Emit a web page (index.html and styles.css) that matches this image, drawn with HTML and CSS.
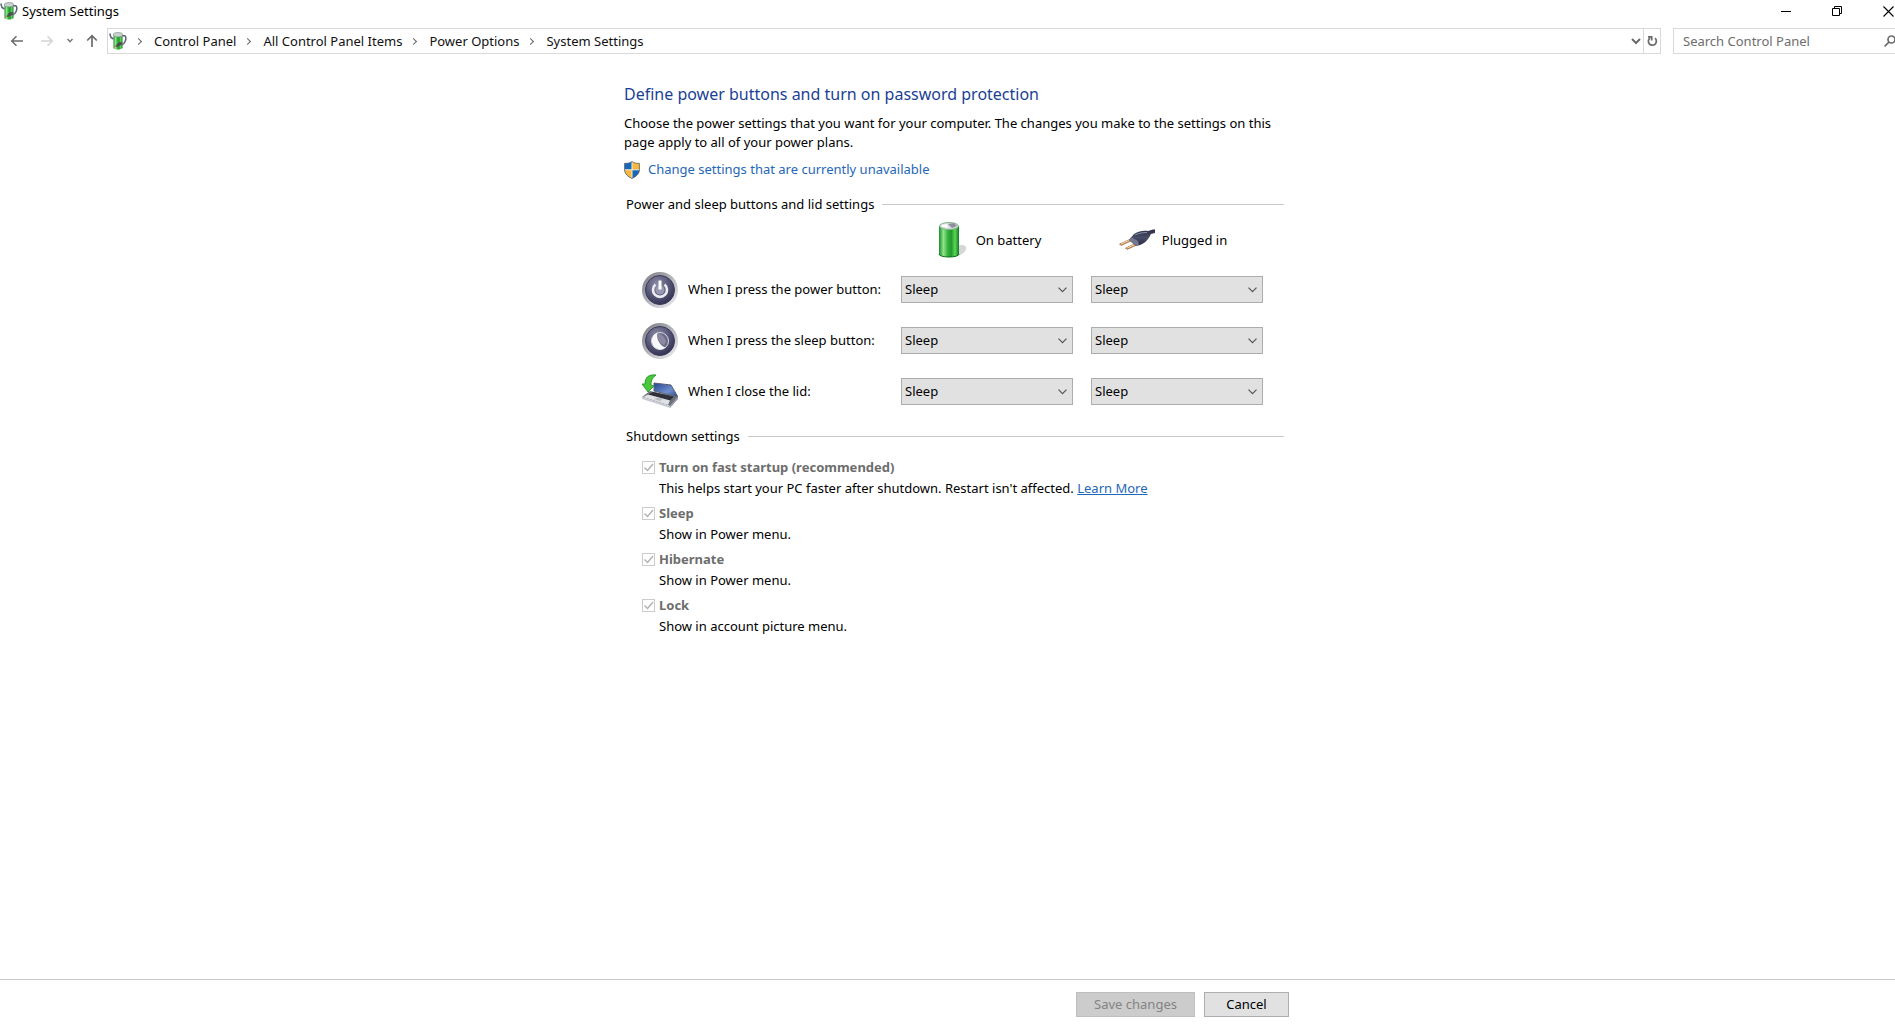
FILE: index.html
```html
<!DOCTYPE html>
<html lang="en">
<head>
<meta charset="utf-8">
<title>System Settings</title>
<link rel="stylesheet" href="styles.css">
</head>
<body>
<svg class="defs" aria-hidden="true">
  <defs>
    <linearGradient id="green" x1="0" x2="1" y1="0" y2="0">
      <stop offset="0" stop-color="#1c8a2c"/><stop offset=".22" stop-color="#8fe68a"/><stop offset=".45" stop-color="#35ad3a"/><stop offset=".62" stop-color="#1f9a2c"/><stop offset=".8" stop-color="#5fd65a"/><stop offset="1" stop-color="#0f7a1f"/>
    </linearGradient>
    <linearGradient id="ring" x1="0" x2="1" y1="0" y2="1">
      <stop offset="0" stop-color="#77777c"/><stop offset=".5" stop-color="#b4b4bc"/><stop offset="1" stop-color="#f1f1f5"/>
    </linearGradient>
    <radialGradient id="face" cx=".4" cy=".3" r=".75">
      <stop offset="0" stop-color="#8d8ca6"/><stop offset=".5" stop-color="#5c5b7c"/><stop offset="1" stop-color="#2f2e50"/>
    </radialGradient>
    <linearGradient id="screen" x1="0" x2="1" y1="0" y2="1">
      <stop offset="0" stop-color="#26468f"/><stop offset=".6" stop-color="#6f8fd0"/><stop offset="1" stop-color="#2b3f7c"/>
    </linearGradient>
    <linearGradient id="plug" x1="0" x2="0" y1="0" y2="1">
      <stop offset="0" stop-color="#2c2e45"/><stop offset=".5" stop-color="#4a4d68"/><stop offset="1" stop-color="#24263a"/>
    </linearGradient>
    <symbol id="power-icon" viewBox="0 0 18 18">
      <path d="M4.500 3v12.500c0 2.800 9 2.800 9 0V3z" fill="url(#green)"/>
      <ellipse cx="9" cy="2.800" rx="4.600" ry="2.200" fill="#c9d3cd" stroke="#6f7f78" stroke-width=".6"/>
      <path d="M.8 1.500l1.200 4 2.500 1.500M13.500 4c3.500-1.500 4 2 2.600 5.500-.8 2-2 3-3.600 3.500" fill="none" stroke="#5d6070" stroke-width="1.500"/>
      <path d="M5.500 15l4-4.500 4-.5-1.500 3-4 2z" fill="#4a4c50"/>
      <path d="M4.500 16l3-2" stroke="#c99a5c"/>
    </symbol>
  </defs>
</svg>

<div class="window">
  <header class="titlebar">
    <svg class="app-icon" aria-hidden="true"><use href="#power-icon"/></svg>
    <h1 class="window-title">System Settings</h1>
    <div class="window-controls">
      <button class="control" type="button" aria-label="Minimize"><svg width="11" height="11" viewBox="0 0 11 11"><path d="M0 5.500h10" stroke="#000"/></svg></button>
      <button class="control" type="button" aria-label="Restore"><svg width="11" height="11" viewBox="0 0 11 11" fill="none" stroke="#000"><path d="M.5 2.500h7v7h-7zM2.500 2.500v-2h7v7h-2"/></svg></button>
      <button class="control" type="button" aria-label="Close"><svg width="12" height="11" viewBox="0 0 12 11"><path d="M.5.500l10 10M10.500.500l-10 10" stroke="#000" stroke-width="1.100"/></svg></button>
    </div>
  </header>

  <nav class="navbar" aria-label="Navigation">
    <div class="history">
      <button class="nav-button" type="button" aria-label="Back"><svg width="14" height="12" viewBox="0 0 14 12" fill="none" stroke="#6b6b6b" stroke-width="1.500"><path d="M13 6H2M6.500 1.200L1.700 6l4.800 4.800"/></svg></button>
      <button class="nav-button forward" type="button" aria-label="Forward" disabled><svg width="14" height="12" viewBox="0 0 14 12" fill="none" stroke="#d4d4d4" stroke-width="1.500"><path d="M1 6h11M7.500 1.200L12.300 6l-4.800 4.800"/></svg></button>
      <button class="nav-button" type="button" aria-label="Recent locations"><svg width="8" height="6" viewBox="0 0 8 6" fill="none" stroke="#777" stroke-width="1.500"><path d="M1.500 1l2.500 2.700L6.500 1"/></svg></button>
      <button class="nav-button" type="button" aria-label="Up"><svg width="12" height="14" viewBox="0 0 12 14" fill="none" stroke="#6b6b6b" stroke-width="1.700"><path d="M6 13V2M1.200 6.500L6 1.700l4.800 4.800"/></svg></button>
    </div>
    <div class="address">
      <svg class="address-icon" aria-hidden="true"><use href="#power-icon"/></svg>
      <ol class="crumbs">
        <li><a href="#">Control Panel</a></li>
        <li><a href="#">All Control Panel Items</a></li>
        <li><a href="#">Power Options</a></li>
        <li><a href="#">System Settings</a></li>
      </ol>
      <button class="address-button" type="button" aria-label="Previous locations"><svg width="10" height="7" viewBox="0 0 10 7" fill="none" stroke="#6b6b6b" stroke-width="2"><path d="M1 1l4 4 4-4"/></svg></button>
      <button class="address-button refresh" type="button" aria-label="Refresh"><svg width="11" height="12" viewBox="0 0 11 12" fill="none" stroke="#6b6b6b" stroke-width="1.700"><path d="M8 3.200a4 4 0 1 1-5-.2M1 1.800h3.700v3.700"/></svg></button>
    </div>
    <div class="search">
      <input class="search-input" type="search" placeholder="Search Control Panel" aria-label="Search Control Panel">
      <svg class="search-icon" width="11" height="12" viewBox="0 0 11 12" fill="none" stroke="#6b6b6b" stroke-width="1.700" aria-hidden="true"><circle cx="7.500" cy="4.500" r="3.500"/><path d="M5 7L.7 11.300"/></svg>
    </div>
  </nav>

  <main class="content">
    <div class="column">
      <h2 class="page-title">Define power buttons and turn on password protection</h2>
      <p class="intro">Choose the power settings that you want for your computer. The changes you make to the settings on this page apply to all of your power plans.</p>
      <a class="elevate" href="#">
        <svg width="16" height="18" viewBox="0 0 16 18" aria-hidden="true">
          <path d="M8 .5C6 2 3 2.500.5 2.300v6C.5 13 4 15.800 8 17.500z" fill="#1767b8"/>
          <path d="M8 .5C10 2 13 2.500 15.500 2.300v6C15.500 13 12 15.800 8 17.500z" fill="#f6b73c"/>
          <path d="M.5 8.800H8v8.700C4 15.800.8 13 .5 8.800z" fill="#f6b73c"/>
          <path d="M15.500 8.800H8v8.700c4-1.700 7.200-4.500 7.500-8.700z" fill="#1767b8"/>
          <path d="M8 1v16M1 8.800h14" stroke="#f4ecd8"/>
          <path d="M8 .6C6 2 3 2.500.6 2.300v6C.6 13 4 15.800 8 17.400c4-1.600 7.400-4.400 7.400-9.100v-6C13 2.500 10 2 8 .6z" fill="none" stroke="#5b6470" stroke-width=".8"/>
        </svg>
        <span>Change settings that are currently unavailable</span>
      </a>

      <section class="group">
        <h3 class="group-title">Power and sleep buttons and lid settings</h3>
        <div class="settings">
          <div class="source battery">
            <svg width="36" height="38" viewBox="0 0 36 38" aria-hidden="true">
              <path d="M24 25c5-2 10-1 9 3-1 4-6 7-14 8z" fill="#c4c4c8" opacity=".7"/>
              <path d="M6 5v28c0 4 20 4 20 0V5z" fill="url(#green)"/>
              <path d="M6 33c0 4 20 4 20 0" fill="none" stroke="#0f6e1c"/>
              <ellipse cx="16" cy="5" rx="9.500" ry="3.500" fill="#d8dce0" stroke="#7fb885"/>
              <path d="M15 3l6-1 3 3-5 2z" fill="#8b8f9e"/><path d="M8 4l6-1 1 4-5-1z" fill="#fff"/>
            </svg>
            <span id="battery">On battery</span>
          </div>
          <div class="source plugged">
            <svg width="36" height="22" viewBox="0 0 36 22" aria-hidden="true">
              <path d="M.5 15l10-4.500 1.500 1.500-10 4.500zM6.500 19l10-4.500 1.500 1.500-10 4.500z" fill="#c98b52" stroke="#8a5427" stroke-width=".5"/>
              <path d="M2 15l8-3.500M8 19l8-3.500" stroke="#f6d7ae"/>
              <path d="M10 11l5-6c5-3 9-3.500 14-3l5-1.500h2V4l-4 1c-2 4-5 9-11 11l-4 1z" fill="url(#plug)"/>
              <path d="M10 11l2-3 7 4 1 4-3 1z" fill="#74778f"/><path d="M16 6c4-2 8-2.500 12-2.500" stroke="#8b8ea8" fill="none"/>
            </svg>
            <span id="plugged">Plugged in</span>
          </div>

          <div class="action">
            <svg width="36" height="36" viewBox="0 0 36 36" aria-hidden="true">
              <circle cx="18" cy="18" r="18" fill="url(#ring)"/><circle cx="18" cy="18" r="14.500" fill="url(#face)" stroke="#3b3a58"/>
              <path d="M13.500 12.500a7 7 0 1 0 9 0" fill="none" stroke="#ececf4" stroke-width="2.600"/><circle cx="18" cy="18" r="4.500" fill="#9a99b4"/>
              <path d="M18 8.500v9" stroke="#fff" stroke-width="3"/>
            </svg>
            <span id="press-power">When I press the power button:</span>
          </div>
          <select class="choice" aria-labelledby="press-power battery"><option>Sleep</option></select>
          <select class="choice" aria-labelledby="press-power plugged"><option>Sleep</option></select>

          <div class="action">
            <svg width="36" height="36" viewBox="0 0 36 36" aria-hidden="true">
              <circle cx="18" cy="18" r="18" fill="url(#ring)"/><circle cx="18" cy="18" r="14.500" fill="url(#face)" stroke="#3b3a58"/>
              <circle cx="18" cy="18" r="8.500" fill="#6b6a86" stroke="#d5d5e0"/>
              <path d="M15.500 9.800a8.500 8.500 0 1 0 8 14.700C18 23 14 16 15.500 9.800z" fill="#f8f8fb"/>
              <path d="M16 10.500c3 0 7 3 8 8l-2 4c-4-2-7-7-6-12z" fill="#8a89a0"/>
            </svg>
            <span id="press-sleep">When I press the sleep button:</span>
          </div>
          <select class="choice" aria-labelledby="press-sleep battery"><option>Sleep</option></select>
          <select class="choice" aria-labelledby="press-sleep plugged"><option>Sleep</option></select>

          <div class="action">
            <svg width="36" height="36" viewBox="0 0 36 36" aria-hidden="true">
              <path d="M12 9l17 2 7 12-24-6z" fill="url(#screen)" stroke="#59606f"/>
              <path d="M8 17l28 6-8 9-28-9z" fill="#6b6f7a"/>
              <path d="M0 23l28 9v2L0 25z" fill="#c9ccd2"/><path d="M28 32l8-9v2l-8 9z" fill="#8f939c"/>
              <path d="M11 18l21 4.500-4 4-22-6z" fill="#30323b"/><path d="M1 23l5-2.500 22 6-2 4.500z" fill="#dfe1e5"/><path d="M12 25l4-1.500 5 1.500-3 2z" fill="#b9bcc4"/>
              <path d="M14 1C6 0 3 4 3 10H0l6 8 6-6-3-1c0-4 1-7 5-10z" fill="#48c93b" stroke="#1e8a25" stroke-width=".8"/>
            </svg>
            <span id="close-lid">When I close the lid:</span>
          </div>
          <select class="choice" aria-labelledby="close-lid battery"><option>Sleep</option></select>
          <select class="choice" aria-labelledby="close-lid plugged"><option>Sleep</option></select>
        </div>
      </section>

      <section class="group">
        <h3 class="group-title">Shutdown settings</h3>
        <ul class="options">
          <li class="option">
            <input class="check" type="checkbox" id="fast" checked disabled><label for="fast">Turn on fast startup (recommended)</label>
            <p>This helps start your PC faster after shutdown. Restart isn't affected. <a class="learn" href="#">Learn More</a></p>
          </li>
          <li class="option">
            <input class="check" type="checkbox" id="sleep" checked disabled><label for="sleep">Sleep</label>
            <p>Show in Power menu.</p>
          </li>
          <li class="option">
            <input class="check" type="checkbox" id="hibernate" checked disabled><label for="hibernate">Hibernate</label>
            <p>Show in Power menu.</p>
          </li>
          <li class="option">
            <input class="check" type="checkbox" id="lock" checked disabled><label for="lock">Lock</label>
            <p>Show in account picture menu.</p>
          </li>
        </ul>
      </section>
    </div>
  </main>

  <footer class="footer">
    <div class="column buttons">
      <button class="button save" type="button" disabled>Save changes</button>
      <button class="button" type="button">Cancel</button>
    </div>
  </footer>
</div>
</body>
</html>
```
FILE: styles.css
```css
* {
  box-sizing: border-box;
}

body {
  margin: 0;
  background: #fff;
  color: #000;
  font: 13px/19px "Noto Sans", "Open Sans", sans-serif;
}

h1, h2, h3, p, ul, ol {
  margin: 0;
  padding: 0;
  font-size: inherit;
  font-weight: 400;
  list-style: none;
}

button, input, select {
  font: inherit;
  color: inherit;
  margin: 0;
}

svg {
  flex: none;
}

.defs {
  position: absolute;
  width: 0;
  height: 0;
}

.window {
  display: flex;
  flex-direction: column;
  min-height: 100vh;
  overflow: hidden;
}

/* Title bar */
.titlebar {
  display: flex;
  align-items: center;
  height: 22px;
}

.app-icon {
  width: 18px;
  height: 18px;
}

.window-title {
  margin-left: 4px;
}

.window-controls {
  display: flex;
  gap: 40px;
  margin-left: auto;
}

.control, .nav-button, .address-button {
  display: flex;
  align-items: center;
  justify-content: center;
  padding: 0;
  border: 0;
  background: none;
}

/* Navigation bar */
.navbar {
  display: flex;
  height: 26px;
  margin-top: 6px;
}

.history {
  display: flex;
  align-items: center;
  gap: 12px;
  width: 107px;
  padding-left: 10px;
}

.forward {
  margin-left: 4px;
}

.address {
  display: flex;
  flex: 1;
  align-items: center;
  border: 1px solid #d9d9d9;
}

.address-icon {
  width: 18px;
  height: 18px;
  margin-left: 1px;
}

.crumbs {
  display: flex;
  flex: 1;
}

.crumbs li {
  display: flex;
  align-items: center;
}

.crumbs li::before {
  content: "";
  width: 4px;
  height: 4px;
  margin: 0 13px 0 9px;
  border: solid #666;
  border-width: 1px 1px 0 0;
  transform: rotate(45deg);
}

.crumbs a {
  color: #111;
  text-decoration: none;
}

.address-button {
  align-self: stretch;
  width: 14px;
}

.refresh {
  width: 17px;
  border-left: 1px solid #d9d9d9;
}

.search {
  display: flex;
  align-items: center;
  width: 222px;
  margin-left: 12px;
  border: 1px solid #d9d9d9;
  border-right: 0;
}

.search-input {
  flex: 1;
  min-width: 0;
  padding: 0 0 0 9px;
  border: 0;
  outline: 0;
  background: none;
}

.search-input::placeholder {
  color: #6d6d6d;
  opacity: 1;
}

/* Content */
.content {
  flex: 1;
}

.column {
  width: 100%;
  max-width: 685px;
  margin: 0 auto;
  padding-left: 19px;
}

.page-title {
  margin-top: 28px;
  color: #1b3f94;
  font-size: 16px;
  line-height: 24px;
}

.intro {
  margin-top: 8px;
}

.elevate {
  display: flex;
  align-items: center;
  gap: 8px;
  width: fit-content;
  margin-top: 8px;
  color: #1f67b8;
  text-decoration: none;
}

.group {
  padding: 0 6px 0 2px;
}

.group-title {
  display: flex;
  align-items: center;
  gap: 8px;
  height: 24px;
}

.elevate + .group {
  margin-top: 13px;
}

.group + .group {
  margin-top: 7px;
}

.group-title::after {
  content: "";
  flex: 1;
  height: 1px;
  background: #c8c8c8;
}

.settings {
  display: grid;
  grid-template-columns: 241px 172px 172px;
  grid-template-rows: 48px;
  grid-auto-rows: 51px;
  column-gap: 18px;
  align-items: center;
  padding-left: 16px;
}

.source {
  display: flex;
  align-items: center;
  justify-content: center;
  gap: 7px;
}

.battery {
  grid-column: 2;
}

.plugged {
  padding-right: 8px;
}

.action {
  display: flex;
  align-items: center;
  gap: 10px;
  white-space: nowrap;
}

.choice {
  width: 100%;
  height: 27px;
  padding: 0 24px 0 3px;
  border: 1px solid #adadad;
  border-radius: 0;
  appearance: none;
  background: #e1e1e1 url("data:image/svg+xml,%3Csvg xmlns='http://www.w3.org/2000/svg' width='9' height='6' fill='none' stroke='%23555' stroke-width='1.2'%3E%3Cpath d='M.5.7l4 4 4-4'/%3E%3C/svg%3E") no-repeat right 5px center;
}

.options {
  display: grid;
  gap: 6px;
  padding: 10px 0 0 16px;
}

.option {
  display: grid;
  grid-template-columns: 13px 1fr;
  column-gap: 4px;
  row-gap: 2px;
  align-items: center;
}

.option label {
  color: #6d6d6d;
  font-weight: 700;
}

.option p {
  grid-column: 2;
}

.check {
  width: 13px;
  height: 13px;
  border: 1px solid #ccc;
  appearance: none;
  background: #fff;
}

.check:checked {
  background: #fff url("data:image/svg+xml,%3Csvg xmlns='http://www.w3.org/2000/svg' width='11' height='11' fill='none' stroke='%23b0b0b0' stroke-width='1.4'%3E%3Cpath d='M1.500 5.500l3 3 5.500-6.500'/%3E%3C/svg%3E") no-repeat center;
}

.learn {
  color: #1f67b8;
}

/* Footer */
.footer {
  height: 51px;
  padding-top: 12px;
  border-top: 1px solid #c8c8c8;
}

.buttons {
  display: flex;
  justify-content: flex-end;
  gap: 9px;
  padding-right: 1px;
}

.button {
  width: 85px;
  height: 25px;
  padding: 0;
  border: 1px solid #adadad;
  background: #e1e1e1;
}

.save {
  width: 119px;
  border-color: #bfbfbf;
  background: #ccc;
  color: #838383;
}
```
